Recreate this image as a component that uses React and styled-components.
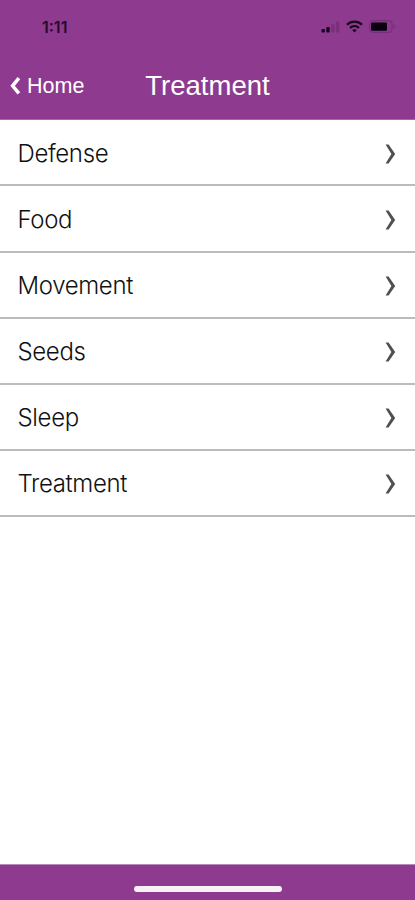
import React from "react";
import styled, { createGlobalStyle } from "styled-components";

const items = ["Defense", "Food", "Movement", "Seeds", "Sleep", "Treatment"];

const App = () => {
    return (
        <Screen>
            <GlobalStyle />
            <Header>
                <StatusBar>
                    <Time>1:11</Time>
                    <StatusIcons>
                        <Signal />
                        <Wifi />
                        <Battery />
                    </StatusIcons>
                </StatusBar>
                <Nav>
                    <Back>
                        <svg width="11" height="18" viewBox="0 0 11 18" fill="none">
                            <path d="M8.9 1.2L2.6 8.8L8.9 16.4" stroke="#fff" strokeWidth="3.5" />
                        </svg>
                        Home
                    </Back>
                    <Title>Treatment</Title>
                </Nav>
            </Header>
            <List>
                {items.map((item) => (
                    <Row key={item}>
                        <Label>{item}</Label>
                        <Chevron />
                    </Row>
                ))}
            </List>
            <Footer>
                <HomeIndicator />
            </Footer>
        </Screen>
    );
};

const Signal = () => (
    <svg width="19" height="12" viewBox="0 0 19 12">
        <rect x="0.5" y="8" width="3.4" height="3.6" rx="1" fill="#16051a" />
        <rect x="5.3" y="6" width="3.4" height="5.6" rx="1" fill="#16051a" />
        <rect x="10.1" y="3" width="3.4" height="8.6" rx="1" fill="#7b307e" />
        <rect x="14.9" y="0.4" width="3.4" height="11.2" rx="1" fill="#7b307e" />
    </svg>
);

const Wifi = () => (
    <svg width="17" height="13" viewBox="0 0 17 13" fill="none" stroke="#16051a" strokeWidth="2.3">
        <path d="M1 4.7C5.2 0.6 11.8 0.6 16 4.7" />
        <path d="M4 8C6.6 5.5 10.4 5.5 13 8" />
        <path d="M8.5 12.5L6.2 10.1C7.6 8.9 9.4 8.9 10.8 10.1Z" fill="#16051a" stroke="none" />
    </svg>
);

const Battery = () => (
    <svg width="27" height="13" viewBox="0 0 27 13">
        <rect x="0.6" y="0.6" width="22.4" height="11.8" rx="3.2" fill="none" stroke="#76307a" strokeWidth="1.1" />
        <rect x="2" y="2.4" width="16" height="8.4" rx="1.2" fill="#090010" />
        <path d="M24.3 4.2C26.4 5 26.4 8 24.3 8.8Z" fill="#76307a" />
    </svg>
);

const Chevron = () => (
    <ChevronIcon width="11" height="20" viewBox="0 0 11 20">
        <path d="M0.6 0.5H3.6L10.2 10L3.6 19.5H0.6L6.4 10Z" fill="#505050" />
    </ChevronIcon>
);

const GlobalStyle = createGlobalStyle`
    * {
        box-sizing: border-box;
    }

    body {
        margin: 0;
        background: #fff;
    }
`;

const Screen = styled.div`
    display: flex;
    flex-direction: column;
    height: 100vh;
    overflow: hidden;
    background: #fff;
`;

const Header = styled.header`
    height: 120px;
    flex: none;
    background: #8e3a8f;
    border-bottom: 1px solid #a468a6;
`;

const StatusBar = styled.div`
    display: flex;
    align-items: center;
    justify-content: space-between;
    height: 53px;
    padding: 0 19px 0 42px;
`;

const Time = styled.span`
    font-family: Inter, sans-serif;
    font-size: 16px;
    font-weight: 600;
    color: #250b29;
`;

const StatusIcons = styled.div`
    display: flex;
    align-items: center;
    gap: 6px;
`;

const Nav = styled.nav`
    display: grid;
    grid-template-columns: 1fr auto 1fr;
    align-items: center;
    height: 66px;
    padding: 0 10px;
    font-family: "Liberation Sans", Arial, sans-serif;
    color: #fff;
`;

const Back = styled.a`
    display: flex;
    align-items: center;
    gap: 6px;
    font-size: 21.5px;
    line-height: 24px;
`;

const Title = styled.h1`
    margin: 0;
    font-size: 27.5px;
    font-weight: 400;
    line-height: 32px;
`;

const List = styled.ul`
    margin: 0;
    padding: 0.4px 0 0;
    flex: 1;
    list-style: none;
`;

const Row = styled.li`
    display: flex;
    align-items: center;
    justify-content: space-between;
    height: 66.1px;
    padding: 2px 19px 0 17.5px;
    border-bottom: 2px solid #bcbcbc;
`;

const ChevronIcon = styled.svg`
    margin-top: 1px;
`;

const Label = styled.span`
    font-family: Inter, sans-serif;
    font-size: 24px;
    font-weight: 300;
    letter-spacing: -0.35px;
    color: #111;
`;

const Footer = styled.footer`
    display: flex;
    justify-content: center;
    flex: none;
    height: 36px;
    padding-top: 21px;
    background: #8e3a8f;
    border-top: 1px solid #b98bba;
`;

const HomeIndicator = styled.div`
    width: 148px;
    height: 6px;
    border-radius: 3px;
    background: #f6f2f6;
`;

export default App;
